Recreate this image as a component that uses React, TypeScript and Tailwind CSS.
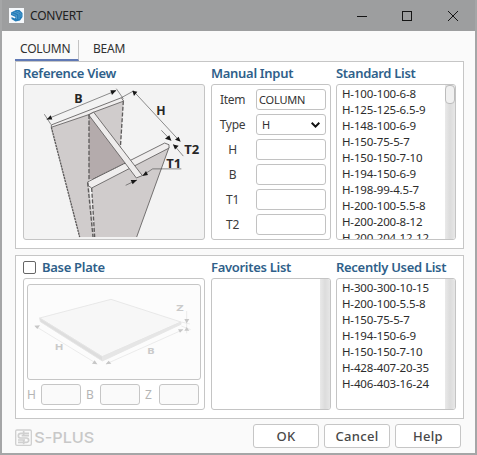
import React from "react";

const standard = [
  "H-100-100-6-8",
  "H-125-125-6.5-9",
  "H-148-100-6-9",
  "H-150-75-5-7",
  "H-150-150-7-10",
  "H-194-150-6-9",
  "H-198-99-4.5-7",
  "H-200-100-5.5-8",
  "H-200-200-8-12",
  "H-200-204-12-12",
];

const recent = [
  "H-300-300-10-15",
  "H-200-100-5.5-8",
  "H-150-75-5-7",
  "H-194-150-6-9",
  "H-150-150-7-10",
  "H-428-407-20-35",
  "H-406-403-16-24",
];

function Heading({ children }: { children: React.ReactNode }) {
  return (
    <h2 className="h-[22px] whitespace-nowrap text-[13px] leading-[23px] font-semibold tracking-[-0.3px] text-[#2f5f8a]">
      {children}
    </h2>
  );
}

function ListBox({ items, thumb, className }: { items: string[]; thumb?: boolean; className: string }) {
  return (
    <div className={`flex overflow-hidden rounded-[3px] border border-[#c4c4c4] bg-white ${className}`}>
      <ul className="min-w-0 flex-1 overflow-hidden pt-px pl-[5px] text-[11.5px] leading-4 tracking-[-0.15px] whitespace-nowrap text-[#2c2c2c]">
        {items.map((item) => (
          <li key={item} className="h-4">
            {item}
          </li>
        ))}
      </ul>
      <div className="w-[10px] shrink-0 bg-linear-to-r from-[#e9e9e9] via-[#dcdcdc] to-[#e6e6e6]">
        {thumb && <div className="h-[19px] w-[10px] rounded-[4px] border border-[#bcbcbc] bg-[#f0f0f0]" />}
      </div>
    </div>
  );
}

function Field({ label, children }: { label: string; children?: React.ReactNode }) {
  return (
    <div className="flex h-[21px] items-center">
      <span className="w-[41px] text-center text-[12px] tracking-[-0.3px] text-[#3c3c3c]">{label}</span>
      <div className="ml-[3px] flex h-[21px] w-[70px] items-center justify-between rounded-[3px] border border-[#c2c2c2] bg-white px-[2px] pt-px text-[11px] tracking-[-0.2px] text-[#303030]">
        {children}
      </div>
    </div>
  );
}

function Beam() {
  return (
    <svg className="block h-full w-full" viewBox="27 30 540 459" preserveAspectRatio="none">
      <g stroke="#5d5b5b" strokeWidth="2.5" strokeLinejoin="round">
        <path d="M109 156 L222 118 L222 325 L239 483 L194 483 Z" fill="#d0cccc" stroke="none" />
        <path d="M222 118 L333 262 L233 311 L222 312 Z" fill="#b4abac" stroke="none" />
        <path d="M232 111 L325 78 L316 218 Z" fill="#d0cccc" stroke="none" />
        <path d="M325 78 L316 218" strokeDasharray="12 5" strokeWidth="4" />
        <path d="M230 336 L462 216 L365 483 L239 483 Z" fill="#d0cccc" stroke="none" />
        <path d="M462 216 L365 483" />
        <path d="M109 149 L319 68 L326 78 L236 111 L222 118 L109 156 Z" fill="#f0eeee" />
        <path d="M218 319 L449 203 L462 208 L462 218 L230 337 L220 330 Z" fill="#f0eeee" />
        <path d="M221 119 L236 111 L382 300 L364 307 Z" fill="#eeecec" />
        <path d="M222 118 V313" strokeDasharray="13 5" strokeWidth="4" />
        <path d="M218 321 L234 483 M230 337 L239 483" strokeDasharray="12 5" strokeWidth="4" />
        <path d="M109 156 L194 483" strokeDasharray="7 2" strokeWidth="4" />
        <path d="M235 309 L333 262" strokeDasharray="3 3" />
      </g>
      <g stroke="#444" strokeWidth="1.8" fill="none">
        <path d="M95 132 L303 47 M88 117 L108 148 M304 41 L325 71 M319 68 L357 47 M357 50 L494 197 M439 165 L468 195 M475 207 L505 242 M332 329 L366 313 M382 300 L413 280 H499" />
      </g>
      <g fill="#171717">
        <path d="M95 133 L107 120 L112 133 Z M304 46 L286 46 L291 60 Z M352 47 L367 50 L357 63 Z M497 199 L480 193 L491 184 Z M469 196 L450 190 L463 180 Z M474 207 L491 211 L480 222 Z M366 313 L347 313 L353 326 Z M382 301 L393 286 L399 298 Z" />
      </g>
      <g fill="#262626" fontWeight="700" fontSize="39" fontFamily="'Noto Sans', sans-serif">
        <text x="178" y="85" textLength="25" lengthAdjust="spacingAndGlyphs">B</text>
        <text x="424" y="119" textLength="28" lengthAdjust="spacingAndGlyphs">H</text>
        <text x="508" y="237" textLength="45" lengthAdjust="spacingAndGlyphs">T2</text>
        <text x="454" y="278" textLength="45" lengthAdjust="spacingAndGlyphs">T1</text>
      </g>
    </svg>
  );
}

function Plate() {
  return (
    <svg className="block h-full w-full" viewBox="84 105 516 282" preserveAspectRatio="none">
      <g stroke="#e4e4e4" strokeWidth="2.5" strokeLinejoin="round">
        <path d="M119 204 L333 148 L543 216 L307 320 Z" fill="#f7f7f7" />
        <path d="M119 204 L307 320 V333 L121 215 Z" fill="#dedede" />
        <path d="M307 320 L543 216 V223 L307 333 Z" fill="#e6e6e6" />
      </g>
      <g stroke="#e2e2e2" strokeWidth="2" fill="none">
        <path d="M105 228 L292 342 M318 342 L549 239 M560 183 V250 M544 216 L570 222 M544 228 L572 239" />
      </g>
      <path
        fill="#c7c7c7"
        d="M103 227 L120 226 L112 237 Z M292 343 L276 341 L284 331 Z M317 343 L326 332 L334 341 Z M550 238 L534 238 L540 248 Z M553 207 H568 L560 220 Z M553 242 H568 L560 231 Z"
      />
      <g fill="#cacaca" fontWeight="700" fontSize="25" fontFamily="'Noto Sans', sans-serif">
        <text x="164" y="299" textLength="26" lengthAdjust="spacingAndGlyphs">H</text>
        <text x="442" y="311" textLength="22" lengthAdjust="spacingAndGlyphs">B</text>
        <text x="529" y="184" textLength="22" lengthAdjust="spacingAndGlyphs">Z</text>
      </g>
    </svg>
  );
}

function AppIcon() {
  return (
    <svg className="h-[15px] w-[15px] bg-[#f5f8fb]" viewBox="0 0 30 30">
      <path d="M4 9 L14 4 L21 4 L27 10 V18 L22 25 L13 27 L5 22 V18 L12 21 L13 18 L4 14 Z" fill="#237cb8" />
      <path d="M5 11 L15 15 V22 M10 8 L20 12 V22 M15 6 L24 11 V18" fill="none" stroke="#69add6" strokeWidth="1.2" />
    </svg>
  );
}

function Brand() {
  return (
    <svg className="h-[18px] w-[80px]" viewBox="0 0 240 54">
      <rect x="2" y="3" width="47" height="46" rx="4" fill="none" stroke="#d0d0d0" strokeWidth="4" />
      <path d="M42 13 H18 Q10 13 10 20 Q10 27 18 27 H34 Q41 27 41 34 Q41 40 34 40 H9 M26 6 V21 M26 33 V46 M20 20 H42 M9 33 H30" fill="none" stroke="#d0d0d0" strokeWidth="5" />
      <text x="58" y="42" fill="#c8c8c8" fontSize="45" fontWeight="500" fontFamily="Inter, sans-serif" textLength="180" lengthAdjust="spacingAndGlyphs">
        S-PLUS
      </text>
    </svg>
  );
}

export default function App() {
  return (
    <div className="flex h-[455px] w-[477px] flex-col overflow-hidden border-r-2 border-b-2 border-l-2 border-[#a5a6a7] bg-[#fafafa] font-['Noto_Sans',sans-serif]">
      <header className="-mx-0.5 flex h-[31px] shrink-0 items-center bg-[#9d9e9f] pl-[9px]">
        <AppIcon />
        <span className="ml-[6px] text-[12px] tracking-[-0.2px] text-[#202020]">CONVERT</span>
        <svg className="ml-auto mr-[18px] h-3 w-[103px]" viewBox="0 0 103 12" fill="none" stroke="#151515" strokeWidth="1">
          <path d="M1 6.5 H11" />
          <rect x="46.5" y="1.5" width="9" height="9" />
          <path d="M92 1 L102 11 M102 1 L92 11" />
        </svg>
      </header>

      <nav className="flex h-[30px] shrink-0 items-end pl-[13px] text-[12px] text-[#303030]">
        <div className="h-[21px] w-[64px] border-r border-b-2 border-r-[#c4c4c4] border-b-[#6079b5] pl-[5px] leading-[18px] tracking-[-0.2px]">
          COLUMN
        </div>
        <div className="h-[21px] pl-[14px] leading-[18px] tracking-[-0.2px]">BEAM</div>
      </nav>

      <section className="ml-[13px] flex h-[188px] w-[449px] shrink-0 border border-[#c6c6c6] bg-white pl-[7px]">
        <div className="w-[182px]">
          <Heading>Reference View</Heading>
          <div className="h-[156px] overflow-hidden rounded-[3px] border border-[#c4c4c4] bg-[#f3f3f3]">
            <Beam />
          </div>
        </div>
        <div className="ml-[6px] w-[120px]">
          <Heading>Manual Input</Heading>
          <div className="flex h-[156px] flex-col gap-1 rounded-[3px] border border-[#c4c4c4] pt-1">
            <Field label="Item">COLUMN</Field>
            <Field label="Type">
              <span className="pl-[3px]">H</span>
              <svg className="mr-[3px] mb-px h-[6px] w-[9px]" viewBox="0 0 9 6" fill="none" stroke="#111" strokeWidth="2">
                <path d="M0.7 0.8 L4.5 4.6 L8.3 0.8" />
              </svg>
            </Field>
            <Field label="H" />
            <Field label="B" />
            <Field label="T1" />
            <Field label="T2" />
          </div>
        </div>
        <div className="ml-[5px] w-[120px]">
          <Heading>Standard List</Heading>
          <ListBox items={standard} thumb className="h-[156px]" />
        </div>
      </section>

      <section className="mt-[6px] ml-[13px] flex h-[164px] w-[449px] shrink-0 border border-[#c6c6c6] bg-white pl-[7px]">
        <div className="w-[182px]">
          <div className="flex items-center">
            <span className="mr-[6px] h-[13px] w-[13px] rounded-[2px] border border-[#666] bg-white" />
            <Heading>Base Plate</Heading>
          </div>
          <div className="h-[132px] rounded-[3px] border border-[#c6c6c6] pt-[5px] pl-[3px]">
            <div className="h-[96px] w-[174px] rounded-[3px] border border-[#c6c6c6] bg-[#fcfcfc]">
              <Plate />
            </div>
            <div className="mt-1 flex text-[12px] text-[#b5b5b5]">
              {["H", "B", "Z"].map((name) => (
                <label key={name} className="flex w-[59px] items-center">
                  <span className="w-[14px]">{name}</span>
                  <span className="h-[21px] w-[40px] rounded-[3px] border border-[#c6c6c6] bg-[#fafafa]" />
                </label>
              ))}
            </div>
          </div>
        </div>
        <div className="ml-[6px] w-[120px]">
          <Heading>Favorites List</Heading>
          <ListBox items={[]} className="h-[132px]" />
        </div>
        <div className="ml-[5px] w-[120px]">
          <Heading>Recently Used List</Heading>
          <ListBox items={recent} className="h-[132px]" />
        </div>
      </section>

      <footer className="flex pt-[5px] pl-[13px]">
        <div className="pt-[5px]">
          <Brand />
        </div>
        <div className="ml-[158px] flex gap-[5px] text-[13px] font-medium tracking-[0.3px] text-[#484848]">
          {["OK", "Cancel", "Help"].map((name) => (
            <button key={name} className="h-6 w-[66px] rounded-[3px] border border-[#c6c6c6] bg-white leading-[22px]">
              {name}
            </button>
          ))}
        </div>
      </footer>
    </div>
  );
}
